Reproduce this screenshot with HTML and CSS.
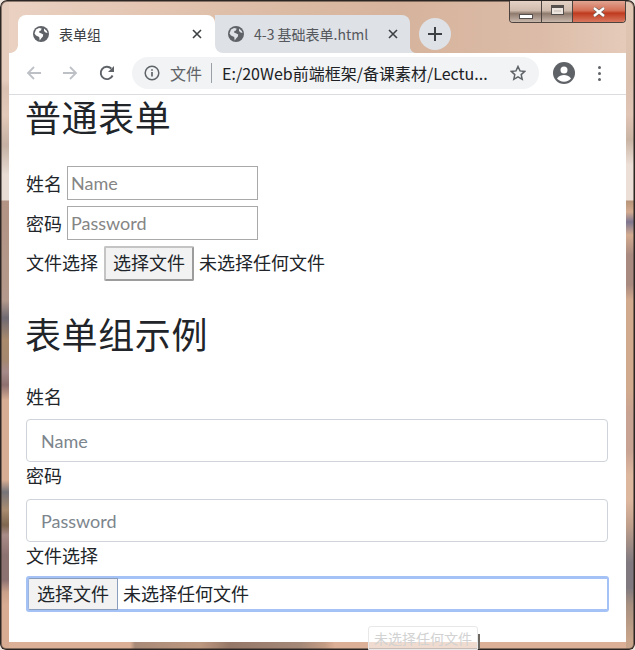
FILE: index.html
```html
<!DOCTYPE html>
<html lang="zh-CN">
<head>
<meta charset="utf-8">
<title>表单组</title>
<link rel="stylesheet" href="styles.css">
</head>
<body>
<div class="window">
  <div class="controls">
    <div class="ctl ctl-min"><span class="min-glyph"></span></div>
    <div class="ctl ctl-max"><span class="max-glyph"></span></div>
    <div class="ctl ctl-close"><svg width="14" height="10" viewBox="0 0 14 10"><path d="M2 1l10 8M12 1L2 9" stroke="#6b5f5a" stroke-width="3.600" fill="none"/><path d="M2 1l10 8M12 1L2 9" stroke="#fff" stroke-width="2.400" fill="none"/></svg></div>
  </div>
  <div class="tabstrip">
    <div class="tab tab-active">
      <svg class="globe" viewBox="0 0 16 16"><circle cx="8" cy="8" r="8" fill="#5f6368"/><path d="M3 3.5l3-1.5 2.6.6-.6 2-1.6.4-.3 1.5 2.3 1 1.8 1-.3 2-1.6 1.700L6.700 14.500l-.5-3.500L3 9.500 1.500 7.500zM11 2.500l2.800 2.500.7 2-1.900-.5-1.600-1.500z" fill="#fff"/></svg>
      <span class="tab-title">表单组</span>
      <svg class="tab-x" viewBox="0 0 10 10"><path d="M1 1l8 8M9 1L1 9" stroke="#3c4043" stroke-width="1.600"/></svg>
    </div>
    <div class="tab tab-idle">
      <svg class="globe" viewBox="0 0 16 16"><circle cx="8" cy="8" r="8" fill="#5f6368"/><path d="M3 3.5l3-1.5 2.6.6-.6 2-1.6.4-.3 1.5 2.3 1 1.8 1-.3 2-1.6 1.700L6.700 14.500l-.5-3.500L3 9.500 1.500 7.500zM11 2.500l2.800 2.500.7 2-1.900-.5-1.600-1.500z" fill="#dee1e6"/></svg>
      <span class="tab-title idle-title">4-3 基础表单.html</span>
      <svg class="tab-x" viewBox="0 0 10 10"><path d="M1 1l8 8M9 1L1 9" stroke="#3c4043" stroke-width="1.600"/></svg>
    </div>
    <div class="newtab"><svg width="16" height="16" viewBox="0 0 16 16"><path d="M8 1v14M1 8h14" stroke="#3c4043" stroke-width="2"/></svg></div>
  </div>
  <div class="toolbar">
    <svg class="nav" viewBox="0 0 16 16"><path d="M15 8H2M8 2L2 8l6 6" stroke="#bdc1c6" stroke-width="1.800" fill="none"/></svg>
    <svg class="nav" viewBox="0 0 16 16"><path d="M1 8h13M8 2l6 6-6 6" stroke="#bdc1c6" stroke-width="1.800" fill="none"/></svg>
    <svg class="nav nav-reload" viewBox="0 0 16 16"><path d="M13.600 10.500A6.200 6.200 0 1 1 12.300 3.500" stroke="#5f6368" stroke-width="1.900" fill="none"/><path d="M15 1v6H9z" fill="#5f6368"/></svg>
    <div class="omnibox">
      <svg class="info" viewBox="0 0 16 16"><circle cx="8" cy="8" r="6.800" stroke="#5f6368" stroke-width="1.500" fill="none"/><path d="M8 7v4.500M8 4.200v1.600" stroke="#5f6368" stroke-width="1.700"/></svg>
      <span class="scheme">文件</span>
      <span class="divider"></span>
      <span class="url">E:/20Web前端框架/备课素材/Lectu...</span>
      <svg class="star" viewBox="0 0 16 16"><path d="M8 1.500l2 4.400 4.800.5-3.600 3.200 1 4.700L8 11.900l-4.200 2.400 1-4.700L1.200 6.400 6 5.900z" stroke="#5f6368" stroke-width="1.500" fill="none"/></svg>
    </div>
    <svg class="avatar" viewBox="0 0 22 22"><circle cx="11" cy="11" r="11" fill="#5f6368"/><circle cx="11" cy="8" r="3.500" fill="#fff"/><path d="M4 16.500c2-3 4.500-3.500 7-3.500s5 .5 7 3.500c-1.500 2-4 3.200-7 3.200s-5.500-1.200-7-3.200z" fill="#fff"/></svg>
    <div class="kebab"><i></i><i></i><i></i></div>
  </div>
  <main class="page">
    <h2 class="heading heading-first">普通表单</h2>
    <form class="plain-form">
      <div class="plain-row"><label>姓名</label><input class="plain-input" type="text" placeholder="Name"></div>
      <div class="plain-row"><label>密码</label><input class="plain-input" type="password" placeholder="Password"></div>
      <div class="plain-row plain-file"><label>文件选择</label><span class="file-btn file-btn-raised">选择文件</span><span class="file-none">未选择任何文件</span></div>
    </form>
    <h2 class="heading heading-second">表单组示例</h2>
    <form class="group-form">
      <label class="group-label">姓名</label>
      <input class="group-input" type="text" placeholder="Name">
      <label class="group-label">密码</label>
      <input class="group-input" type="password" placeholder="Password">
      <label class="group-label">文件选择</label>
      <div class="group-file"><span class="file-btn file-btn-flat">选择文件</span><span class="file-none">未选择任何文件</span></div>
    </form>
  </main>
  <div class="drag-ghost">未选择任何文件</div>
</div>
</body>
</html>
```
FILE: styles.css
```css
* { box-sizing: border-box; }
html, body { margin: 0; height: 100%; }
body {
  width: 635px;
  height: 650px;
  overflow: hidden;
  background: #efe6e0;
  font-family: "Noto Sans CJK SC", "Lato", sans-serif;
  color: #212529;
}
.window {
  position: relative;
  width: 635px;
  height: 650px;
  padding: 15px 9px 8px 9px;
  display: flex;
  flex-direction: column;
  border-radius: 7px 7px 6px 6px;
  box-shadow: inset 0 0 0 1px #2b2624, inset 0 0 0 2px rgba(60,50,45,.55);
  background:
    linear-gradient(#e6ccbc 0, #e6ccbc 80px, #d9c0b0 88px, #e3c9b9 115px, #c5b0a3 145px, #e8dcd4 175px, #e8dcd4 200px, #b29384 201px, #b49a8c 300px, #6f6a72 318px, #a98a6c 340px, #a5886f 360px, #a58a8a 372px, #8e7070 385px, #d7ad93 400px, #d7ad93 480px, #77757a 492px, #a98c70 510px, #7e6650 525px, #a98c88 535px, #8d7272 555px, #8d7272 580px, #c9a08a 592px, #d8ac92 605px) left top / 9px 100% no-repeat,
    linear-gradient(#e3c7b5 0, #dcc0ae 80px, #e0c4b4 115px, #c9b4a4 140px, #ecdfd7 165px, #ecdfd7 200px, #b8957a 201px, #d3ab90 212px, #7d7690 222px, #d3ab90 235px, #a98a80 255px, #a98a80 285px, #d2aa8e 300px, #d2aa8e 390px, #c8a292 415px, #c8a292 450px, #deb79f 475px, #deb79f 500px, #c0a08c 525px, #807a80 562px, #807a80 588px, #a89080 605px, #c8a58a 640px) right top / 9px 100% no-repeat,
    linear-gradient(90deg, #dcb096 0, #dcb096 130px, #a88a78 135px, #bd9880 200px, #967868 230px, #a48878 300px, #c49c84 325px, #dcb096 335px) left bottom / 100% 8px no-repeat,
    linear-gradient(90deg, #ead2c3 0, #e6c9b7 100px, #ddbda7 250px, #d6b39c 400px, #dcbca8 540px, #e6ccbc 635px);
}
.controls {
  position: absolute;
  top: 1px;
  right: 9px;
  display: flex;
  width: 117px;
  height: 22px;
  border: 1px solid #4d4440;
  border-top: 0;
  border-radius: 0 0 4px 4px;
  overflow: hidden;
}
.ctl { display: flex; align-items: center; justify-content: center; }
.ctl-min, .ctl-max {
  background: linear-gradient(#e4d2c6 0, #d0bcae 45%, #8f7a6e 60%, #c9b8ac 100%);
  border-right: 1px solid #4d4440;
}
.ctl-min { width: 32px; }
.ctl-max { width: 31px; }
.ctl-close {
  flex: 1;
  background: linear-gradient(#e0a592 0, #d56f56 45%, #bf3a1e 58%, #d9785f 100%);
}
.min-glyph { width: 14px; height: 5px; margin-top: 9px; background: #fff; border: 1px solid #55504d; }
.max-glyph { width: 13px; height: 10px; margin-top: -3px; background: #d9cfc8; border: 1px solid #55504d; border-top-width: 3px; box-shadow: inset 0 0 0 2px #ece5df; }
.tabstrip {
  height: 38px;
  display: flex;
  align-items: stretch;
  padding-left: 9px;
  flex: none;
}
.tab {
  position: relative;
  display: flex;
  align-items: center;
  border-radius: 8px 8px 0 0;
  font-size: 14px;
  padding-left: 15px;
}
.tab-active { width: 197px; background: #fff; }
.tab-active::before {
  content: "";
  position: absolute;
  left: -8px;
  bottom: 0;
  width: 8px;
  height: 8px;
  background: radial-gradient(circle at 0 0, transparent 7.500px, #fff 8.200px);
}
.tab-active::after {
  content: "";
  position: absolute;
  right: -8px;
  bottom: 0;
  width: 8px;
  height: 8px;
  background: #fff;
}
.tab-idle { z-index: 1; width: 195px; background: #dee1e6; border-radius: 0 8px 0 8px; padding-left: 13px; }
.tab-idle::after {
  content: "";
  position: absolute;
  right: -6px;
  bottom: 0;
  width: 6px;
  height: 6px;
  background: radial-gradient(circle at 100% 0, transparent 5.500px, #dee1e6 6.200px);
}
.globe { width: 16px; height: 16px; flex: none; }
.tab-title { margin-left: 10px; color: #3c4043; white-space: nowrap; flex: 1; line-height: 16px; }
.idle-title { color: #55585c; }
.tab-x { width: 10px; height: 10px; margin-right: 13px; flex: none; }
.tab-idle .tab-x { margin-right: 12px; }
.newtab {
  width: 32px;
  height: 32px;
  margin: 3px 0 0 9px;
  border-radius: 50%;
  background: #dee1e6;
  display: flex;
  align-items: center;
  justify-content: center;
}
.toolbar {
  height: 42px;
  flex: none;
  display: flex;
  align-items: center;
  background: #fff;
  border-bottom: 1px solid #dadce0;
  padding: 0 0 1px 17px;
}
.nav { width: 16px; height: 16px; margin-right: 20px; flex: none; }
.nav-reload { margin-left: 1px; margin-right: 17px; }
.omnibox {
  width: 407px;
  height: 32px;
  display: flex;
  align-items: center;
  border-radius: 16px;
  background: #f1f3f4;
  padding: 0 13px 0 12px;
  font-size: 16px;
}
.info { width: 16px; height: 16px; flex: none; }
.scheme { margin-left: 10px; color: #5f6368; }
.divider { width: 1px; height: 20px; background: #9aa0a6; margin: 0 10px 0 9px; }
.url { color: #202124; white-space: nowrap; flex: 1; }
.star { width: 16px; height: 16px; flex: none; }
.avatar { width: 22px; height: 22px; margin-left: 14px; flex: none; }
.kebab { margin-left: 23px; display: flex; flex-direction: column; gap: 3px; }
.kebab i { display: block; width: 3px; height: 3px; border-radius: 50%; background: #5f6368; }
.page {
  flex: 1;
  background: #fff;
  padding: 0 17px;
  min-height: 0;
}
.heading { margin: 0; font-size: 36px; font-weight: 400; line-height: 43px; letter-spacing: .6px; color: #212529; }
.heading-first { margin-top: 0; margin-left: -1px; }
.heading-second { margin-top: 31px; margin-bottom: 28px; margin-left: -1px; }
.plain-form { margin-top: 28px; display: flex; flex-direction: column; }
.plain-row { display: flex; align-items: center; height: 34px; margin-bottom: 6px; font-size: 18px; line-height: 27px; }
.plain-row label { margin-right: 5px; }
.plain-file { height: 35px; margin-bottom: 0; }
.plain-file label { margin-right: 6px; padding-bottom: 2px; }
.plain-input {
  width: 191px;
  height: 34px;
  border: 1px solid #a9a9a9;
  padding: 0 3px;
  font-family: "Lato", sans-serif;
  font-size: 18px;
  color: #212529;
  background: #fff;
  outline: none;
}
.plain-input::placeholder { color: #858585; opacity: 1; }
.group-input::placeholder { color: #7c858d; opacity: 1; }
.file-btn {
  display: flex;
  align-items: center;
  justify-content: center;
  background: #f2f2f2;
  font-size: 18px;
  padding-bottom: 2px;
  color: #212529;
  flex: none;
}
.file-btn-raised {
  width: 90px;
  height: 35px;
  border: 2px solid;
  border-color: #c4c4c4 #9c9c9c #9c9c9c #c4c4c4;
  border-radius: 2px;
}
.file-none { margin-left: 5px; font-size: 18px; padding-bottom: 2px; }
.group-form { display: flex; flex-direction: column; }
.group-label { font-size: 18px; line-height: 27px; height: 27px; margin-bottom: 10px; }
.group-input {
  width: 582px;
  height: 43px;
  border: 1px solid #ced4da;
  border-radius: 4px;
  padding: 0 14px;
  font-family: "Lato", sans-serif;
  font-size: 18px;
  background: #fff;
  outline: none;
}
.group-form .group-label:first-child { margin-bottom: 9px; }
.group-form .group-input:first-of-type { margin-bottom: 0; }
.group-file {
  width: 583px;
  height: 36px;
  margin-top: -3px;
  display: flex;
  align-items: center;
  border: solid #a4c2f6;
  border-width: 3px 2px;
  border-radius: 3px;
  font-size: 18px;
}
.file-btn-flat { width: 90px; height: 32px; margin-top: 0; border: 1px solid #8b9dbd; border-left-color: #9db4dc; border-radius: 2px 0 0 2px; }
.drag-ghost {
  position: absolute;
  left: 368px;
  top: 626px;
  width: 110px;
  height: 24px;
  border: 1px solid #e8e8e8;
  border-radius: 3px 3px 0 0;
  background: rgba(255,255,255,.55);
  font-size: 14px;
  line-height: 22px;
  text-align: center;
  white-space: nowrap;
  color: #d2d2d2;
}
.drag-ghost::after {
  content: "";
  position: absolute;
  right: -3px;
  top: 7px;
  bottom: 0;
  width: 2px;
  background: #6d6762;
}
```
